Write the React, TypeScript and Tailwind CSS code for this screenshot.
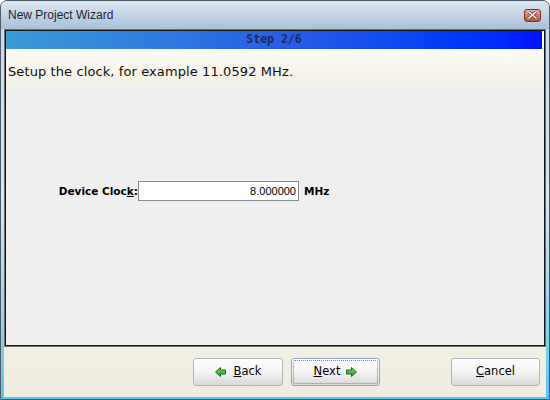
import React from "react";

function ArrowLeft() {
  return (
    <svg width="11" height="10" viewBox="0 0 11 10">
      <defs>
        <linearGradient id="gl" x1="0" y1="0" x2="0" y2="1">
          <stop offset="0" stopColor="#7fdc6a" />
          <stop offset="1" stopColor="#1f9a1f" />
        </linearGradient>
      </defs>
      <polygon points="0.5,5 5.5,0.5 5.5,3 10.5,3 10.5,7 5.5,7 5.5,9.5" fill="url(#gl)" stroke="#1a6e1a" strokeWidth="1" strokeLinejoin="miter" />
    </svg>
  );
}

function ArrowRight() {
  return (
    <svg width="11" height="10" viewBox="0 0 11 10">
      <defs>
        <linearGradient id="gr" x1="0" y1="0" x2="0" y2="1">
          <stop offset="0" stopColor="#7fdc6a" />
          <stop offset="1" stopColor="#1f9a1f" />
        </linearGradient>
      </defs>
      <polygon points="10.5,5 5.5,0.5 5.5,3 0.5,3 0.5,7 5.5,7 5.5,9.5" fill="url(#gr)" stroke="#1a6e1a" strokeWidth="1" />
    </svg>
  );
}

export default function App() {
  const ui = { fontFamily: '"DejaVu Sans", Verdana, sans-serif' };
  const ar = { fontFamily: '"Liberation Sans", Arial, sans-serif' };
  return (
    <div className="w-[550px] h-[400px] border border-[#4d5a68] rounded-t-[7px] overflow-hidden flex flex-col bg-gradient-to-b from-[#c9d8ea] via-[#d6e6f2] to-[#5cc3ea]">
      {/* Title bar */}
      <div className="h-[28px] shrink-0 flex items-center pl-[7px] pr-[8px] bg-gradient-to-b from-[#dde7f2] to-[#a9c0da]">
        <span className="text-[12px] text-[#1b2533] leading-none" style={ar}>
          New Project Wizard
        </span>
        <div className="ml-auto w-[17px] h-[13px] rounded-[3px] border border-[#7a3126] bg-gradient-to-b from-[#e8aaa0] via-[#d57a6b] to-[#b9503f] flex items-center justify-center">
          <svg width="9" height="8" viewBox="0 0 9 8">
            <path d="M1 1 L8 7 M8 1 L1 7" stroke="#6b2a22" strokeWidth="3" strokeLinecap="square" />
            <path d="M1 1 L8 7 M8 1 L1 7" stroke="#ffffff" strokeWidth="1.6" strokeLinecap="square" />
          </svg>
        </div>
      </div>

      {/* Body */}
      <div className="flex-1 mx-[3px] mb-[2px] flex flex-col bg-gradient-to-b from-[#fbfaf5] to-[#efece1]">
        {/* Panel */}
        <div className="h-[318px] shrink-0 border border-[#6e6e6e]">
          <div className="h-full border border-[#141414] flex flex-col">
            <div className="h-[18px] shrink-0 mr-[2px] bg-gradient-to-r from-[#3d9bd5] via-[#2a5fe3] to-[#0010ff] flex items-center justify-center">
              <span className="text-[11.5px] font-bold text-[#1b2b5e] leading-none" style={{ fontFamily: '"DejaVu Sans Mono", monospace' }}>
                Step 2/6
              </span>
            </div>
            <div className="h-[37px] shrink-0 bg-gradient-to-b from-[#fdfcf8] to-[#f2efe3] pt-[16px] pl-[2px]">
              <span className="text-[13px] leading-[14px] tracking-[0.1px] text-[#111] block" style={ui}>
                Setup the clock, for example 11.0592 MHz.
              </span>
            </div>
            <div className="flex-1 bg-[#efefef] pt-[95px]">
              <div className="flex items-center h-[20px]">
                <div className="w-[132px] text-right text-[10.5px] font-bold text-black leading-none" style={ui}>
                  Device Cloc<span className="underline">k</span>:
                </div>
                <div className="w-[161px] h-[20px] bg-white border border-[#8a8a8a] flex items-center justify-end pr-[2px]">
                  <span className="text-[11px] text-black leading-none" style={ar}>8.000000</span>
                </div>
                <span className="ml-[5px] text-[10.5px] font-bold text-black leading-none" style={ui}>MHz</span>
              </div>
            </div>
          </div>
        </div>

        {/* Buttons */}
        <div className="flex-1 flex items-start pt-[11px] pr-[6px] justify-end">
          <button className="w-[90px] h-[28px] rounded-[3px] border border-[#b4b4b4] bg-gradient-to-b from-[#ffffff] via-[#f3f3f3] to-[#d9d9d9] flex items-center justify-center gap-[8px] text-[11.5px] text-black" style={ui}>
            <ArrowLeft />
            <span><span className="underline">B</span>ack</span>
          </button>
          <button className="ml-[8px] w-[89px] h-[28px] rounded-[3px] border border-[#8ea6d6] bg-gradient-to-b from-[#ffffff] via-[#f3f3f3] to-[#d9d9d9] p-[1px]">
            <div className="w-full h-full rounded-[2px] border border-dotted border-[#6d83b4] flex items-center justify-center gap-[6px] text-[11.5px] text-black" style={ui}>
              <span><span className="underline">N</span>ext</span>
              <ArrowRight />
            </div>
          </button>
          <button className="ml-[71px] w-[89px] h-[28px] rounded-[3px] border border-[#b4b4b4] bg-gradient-to-b from-[#ffffff] via-[#f3f3f3] to-[#d9d9d9] flex items-center justify-center text-[11.5px] text-black" style={ui}>
            <span><span className="underline">C</span>ancel</span>
          </button>
        </div>
      </div>
    </div>
  );
}
